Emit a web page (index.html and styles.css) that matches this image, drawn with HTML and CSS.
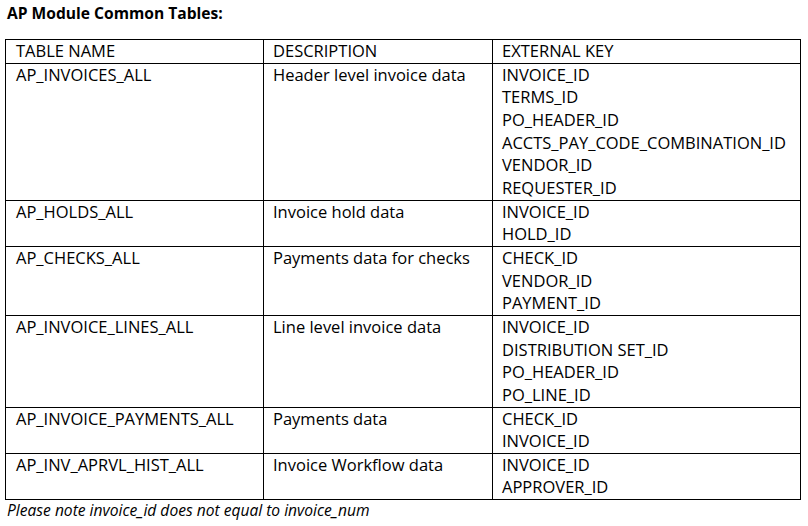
FILE: index.html
```html
<!DOCTYPE html>
<html>
<head>
<meta charset="utf-8">
<title>AP Module Common Tables</title>
<link rel="stylesheet" href="styles.css">
</head>
<body>
<div class="page">
  <h1 class="title">AP Module Common Tables:</h1>
  <table class="tbl">
    <colgroup>
      <col class="c1"><col class="c2"><col class="c3">
    </colgroup>
    <tr>
      <td class="first">TABLE NAME</td>
      <td>DESCRIPTION</td>
      <td>EXTERNAL KEY</td>
    </tr>
    <tr>
      <td class="first">AP_INVOICES_ALL</td>
      <td>Header level invoice data</td>
      <td>INVOICE_ID<br>TERMS_ID<br>PO_HEADER_ID<br>ACCTS_PAY_CODE_COMBINATION_ID<br>VENDOR_ID<br>REQUESTER_ID</td>
    </tr>
    <tr>
      <td class="first">AP_HOLDS_ALL</td>
      <td>Invoice hold data</td>
      <td>INVOICE_ID<br>HOLD_ID</td>
    </tr>
    <tr>
      <td class="first">AP_CHECKS_ALL</td>
      <td>Payments data for checks</td>
      <td>CHECK_ID<br>VENDOR_ID<br>PAYMENT_ID</td>
    </tr>
    <tr>
      <td class="first">AP_INVOICE_LINES_ALL</td>
      <td>Line level invoice data</td>
      <td>INVOICE_ID<br>DISTRIBUTION SET_ID<br>PO_HEADER_ID<br>PO_LINE_ID</td>
    </tr>
    <tr>
      <td class="first">AP_INVOICE_PAYMENTS_ALL</td>
      <td>Payments data</td>
      <td>CHECK_ID<br>INVOICE_ID</td>
    </tr>
    <tr>
      <td class="first">AP_INV_APRVL_HIST_ALL</td>
      <td>Invoice Workflow data</td>
      <td>INVOICE_ID<br>APPROVER_ID</td>
    </tr>
  </table>
  <p class="note">Please note invoice_id does not equal to invoice_num</p>
</div>
</body>
</html>
```
FILE: styles.css
```css
html, body {
  margin: 0;
  padding: 0;
  background: #fff;
}
body {
  font-family: "Open Sans", "Liberation Sans", sans-serif;
  color: #000;
}
.page {
  padding: 0 9px 0 5px;
}
.title {
  margin: 3px 0 16px 2px;
  font-size: 15.6px;
  line-height: 20px;
  font-weight: 700;
}
.tbl {
  width: 795px;
  border-collapse: collapse;
  table-layout: fixed;
  font-size: 16.5px;
  line-height: 22.65px;
}
.c1 { width: 258px; }
.c2 { width: 229px; }
.c3 { width: 308px; }
.tbl td {
  border: 1px solid #000;
  padding: 0 0 0 9px;
  vertical-align: top;
  white-space: nowrap;
}
.tbl td.first {
  padding-left: 10px;
}
.note {
  margin: 0 0 0 2px;
  font-size: 15.6px;
  line-height: 20px;
  font-style: italic;
}
```
